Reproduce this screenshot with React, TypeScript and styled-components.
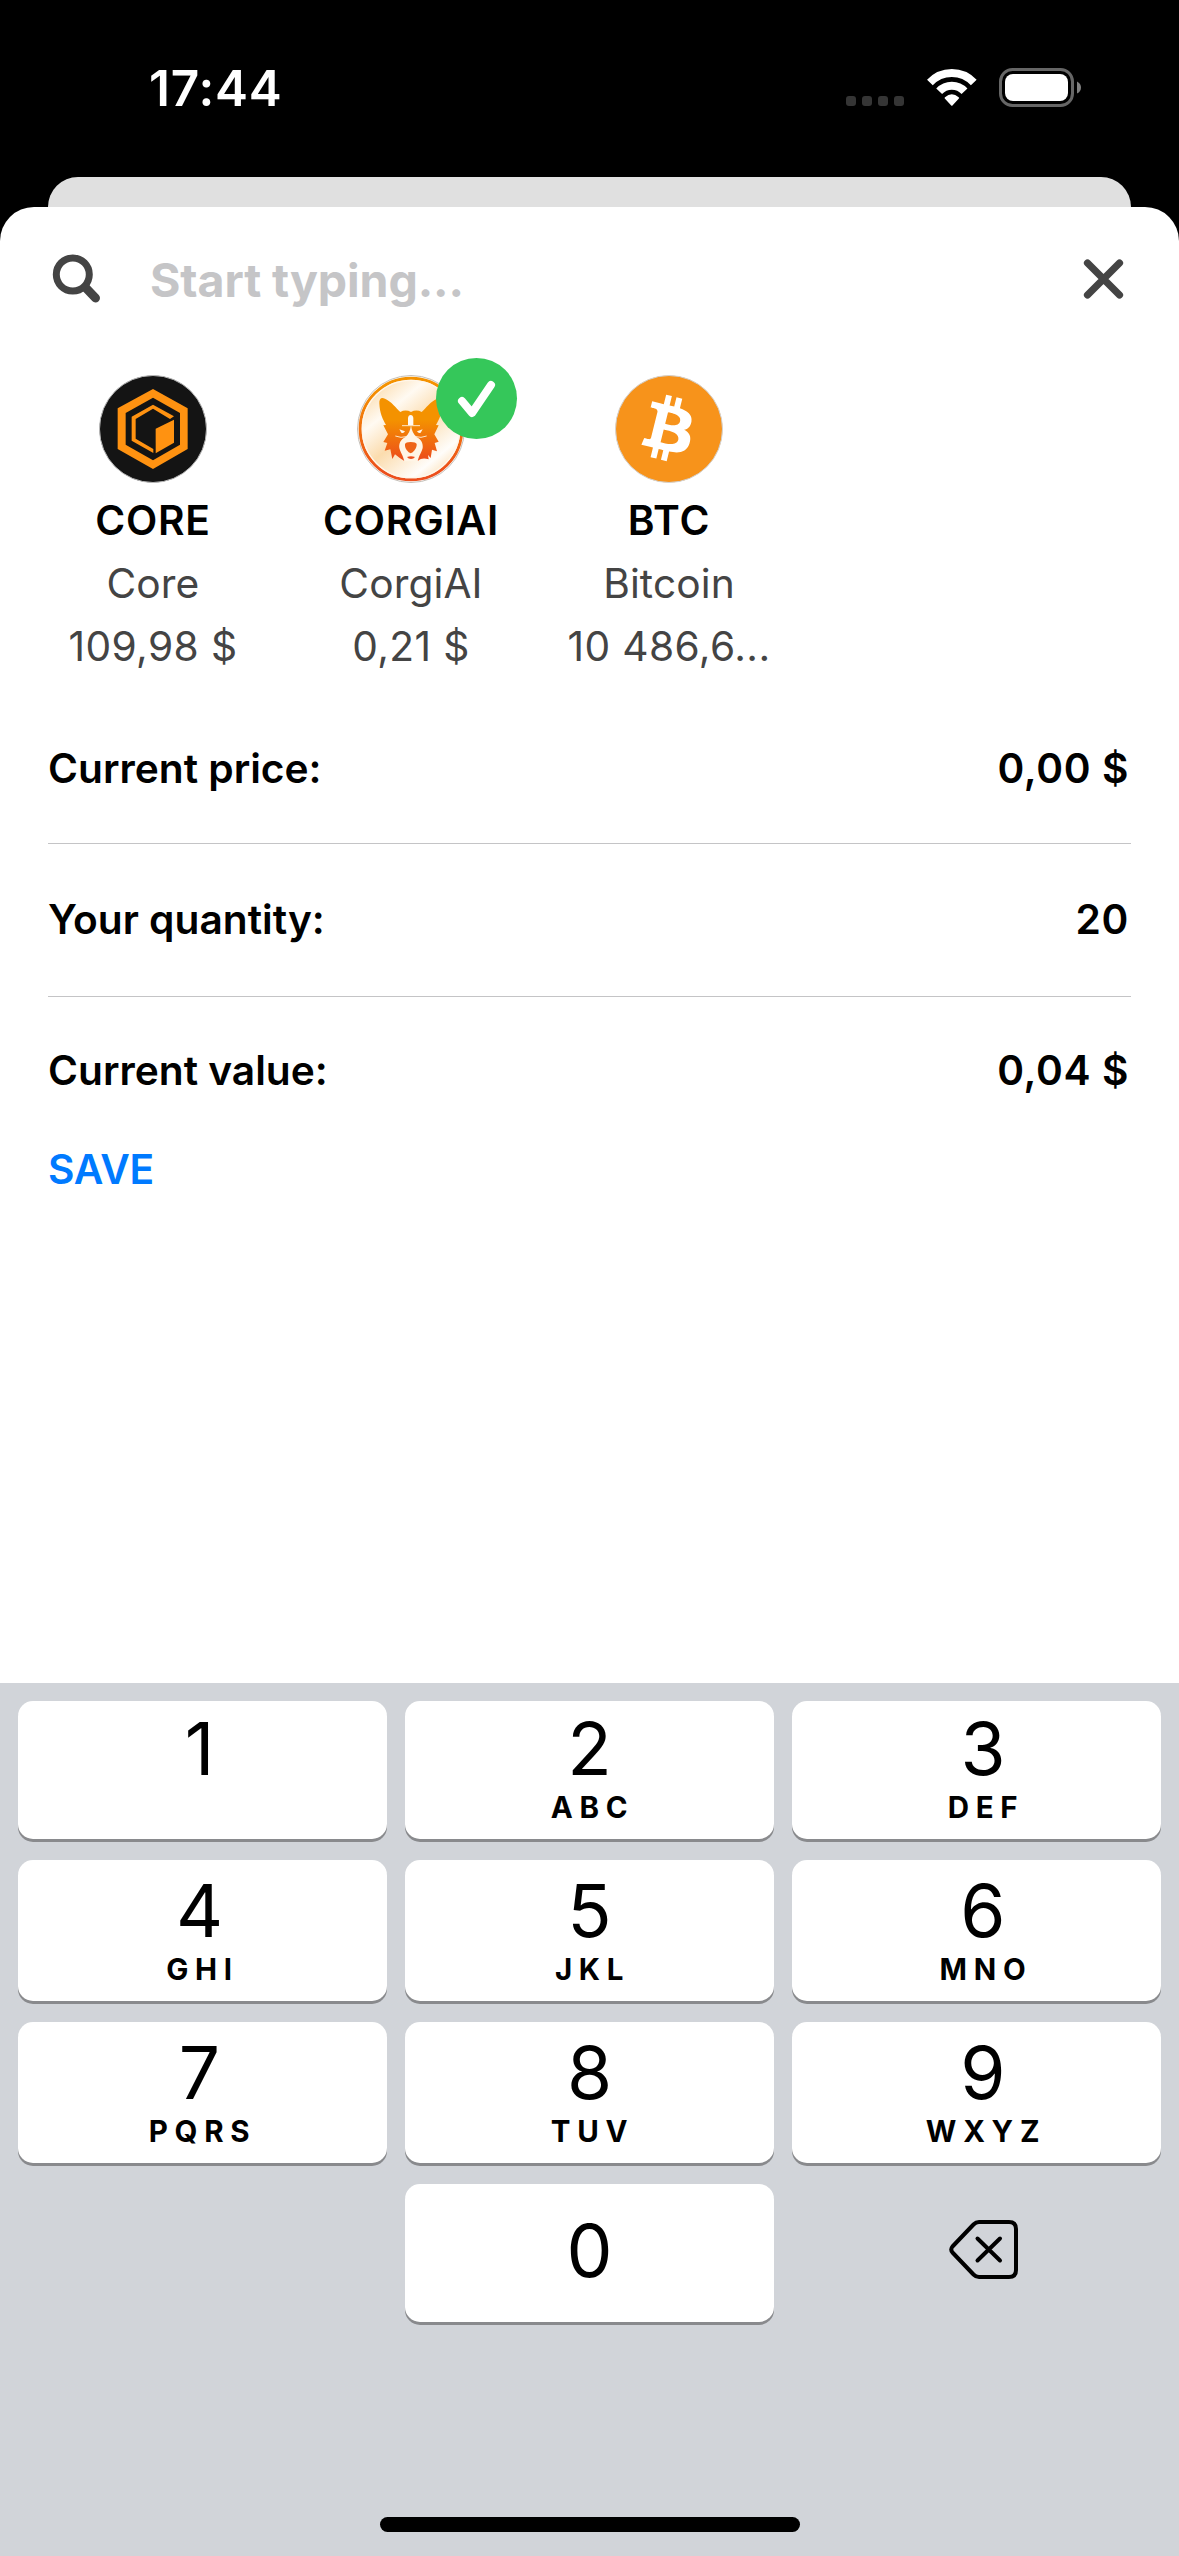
import React from "react";
import styled, { createGlobalStyle } from "styled-components";

const GlobalStyle = createGlobalStyle`
  *, *::before, *::after { box-sizing: border-box; }
  body { margin: 0; background: #000; }
  button, input { font: inherit; border: 0; padding: 0; background: none; }
`;

const Screen = styled.div`
  width: 1179px;
  height: 2556px;
  display: flex;
  flex-direction: column;
  overflow: hidden;
  background: #000;
  color: #000;
  font-family: Inter, "Liberation Sans", sans-serif;
`;

const StatusBar = styled.header`
  height: 177px;
  flex: none;
  display: flex;
  justify-content: space-between;
  align-items: flex-start;
  padding: 58px 98px 0 149px;
`;

const Time = styled.span`
  color: #fff;
  font-size: 49.5px;
  line-height: 60px;
  font-weight: 600;
  letter-spacing: 0.8px;
`;

const StatusIcons = styled.div`
  display: flex;
  padding-top: 10px;
`;

const SignalDots = styled.div`
  display: flex;
  gap: 6px;
  padding-top: 28px;
  margin-right: 23px;
`;

const SignalDot = styled.span`
  width: 10px;
  height: 10px;
  border-radius: 3px;
  background: #353535;
`;

const WifiSvg = styled.svg`
  display: block;
  width: 50px;
  height: 39px;
  margin-right: 22px;
`;

const BatterySvg = styled.svg`
  display: block;
  width: 82px;
  height: 39px;
`;

const BackSheet = styled.div`
  flex: none;
  height: 30px;
  margin: 0 48px;
  background: #e0e0e0;
  border-radius: 30px 30px 0 0;
`;

const Sheet = styled.main`
  flex: 1;
  display: flex;
  flex-direction: column;
  background: #fff;
  border-radius: 34px 34px 0 0;
`;

const SearchBar = styled.div`
  display: flex;
  align-items: center;
  height: 144px;
  padding: 0 54px 0 51px;
`;

const SearchSvg = styled.svg`
  flex: none;
  width: 52px;
  height: 52px;
`;

const SearchInput = styled.input`
  flex: 1;
  min-width: 0;
  height: 66px;
  margin-left: 47px;
  padding-top: 2px;
  font-size: 46.5px;
  font-weight: 700;
  letter-spacing: -0.1px;
  outline: none;
  &::placeholder {
    color: #c5c5c7;
    opacity: 1;
  }
`;

const CloseButton = styled.button`
  width: 43px;
  height: 43px;
  svg {
    display: block;
  }
`;

const CoinList = styled.div`
  display: flex;
  padding: 24px 24px 13px;
`;

const CoinTile = styled.div`
  width: 258px;
  padding: 0 20px;
  display: flex;
  flex-direction: column;
  align-items: center;
`;

const CoinIcon = styled.div`
  position: relative;
  width: 108px;
  height: 108px;
  margin-bottom: 6px;
  > svg {
    display: block;
    width: 108px;
    height: 108px;
  }
`;

const SelectedBadge = styled.span`
  position: absolute;
  top: -17px;
  left: 79px;
  width: 81px;
  height: 81px;
  border-radius: 50%;
  background: #35c75a;
  svg {
    display: block;
  }
`;

const CoinText = styled.span<{ $strong?: boolean; $spacing?: number }>`
  font-size: 40.7px;
  line-height: 63px;
  white-space: pre;
  letter-spacing: ${(p) => p.$spacing ?? 0}px;
  font-weight: ${(p) => (p.$strong ? 600 : 400)};
  color: ${(p) => (p.$strong ? "#000" : "#444")};
`;

const Row = styled.div<{ $first?: boolean; $last?: boolean }>`
  display: flex;
  justify-content: space-between;
  align-items: center;
  height: ${(p) => (p.$last ? 147 : 153)}px;
  margin: 0 48px;
  padding-top: ${(p) => (p.$first ? 4 : 0)}px;
  padding-right: 2px;
  border-bottom: ${(p) => (p.$last ? "0" : "1px solid #c4c4c6")};
  font-size: 40.7px;
  line-height: 60px;
  font-weight: 600;
  white-space: pre;
`;

const RowValue = styled.span`
  letter-spacing: 0.6px;
`;

const SaveButton = styled.button`
  align-self: flex-start;
  margin: -4px 0 0 48px;
  height: 60px;
  color: #007aff;
  font-size: 40.7px;
  line-height: 60px;
  font-weight: 600;
  letter-spacing: -0.2px;
`;

const Keyboard = styled.section`
  flex: none;
  height: 873px;
  display: flex;
  flex-direction: column;
  align-items: center;
  padding: 18px 18px 24px;
  background: #d1d4d9;
`;

const Keys = styled.div`
  width: 100%;
  display: grid;
  grid-template-columns: repeat(3, 369px);
  grid-template-rows: 138px 141px 141px 138px;
  column-gap: 18px;
  row-gap: 21px;
`;

const Key = styled.button<{ $top: number; $shift: number }>`
  display: flex;
  flex-direction: column;
  align-items: center;
  justify-content: flex-start;
  padding-top: ${(p) => p.$top}px;
  padding-left: ${(p) => Math.max(0, p.$shift * 2)}px;
  padding-right: ${(p) => Math.max(0, p.$shift * -2)}px;
  color: #000;
  background: #fff;
  border-radius: 15px;
  box-shadow: 0 3px 0 #898a8d;
`;

const Digit = styled.span`
  font-size: 73px;
  line-height: 53px;
  font-weight: 400;
`;

const Letters = styled.span`
  margin-top: 22px;
  padding-left: 6px;
  font-size: 29.5px;
  line-height: 21px;
  font-weight: 700;
  letter-spacing: 6.7px;
`;

const EmptyCell = styled.span``;

const DeleteKey = styled.button`
  display: flex;
  justify-content: center;
  align-items: flex-start;
  padding: 34px 0 0 15px;
`;

const HomeIndicator = styled.div`
  width: 420px;
  height: 15px;
  margin-top: auto;
  border-radius: 8px;
  background: #000;
`;

const WifiIcon = () => (
  <WifiSvg viewBox="440 204 150 117" fill="none">
    <path d="M448.7 247.6A90 90 0 0 1 580.3 247.6" stroke="#fff" strokeWidth="23.5" />
    <path d="M476.5 273.5A52 52 0 0 1 552.5 273.5" stroke="#fff" strokeWidth="24" />
    <path d="M494 296Q491 293 494 291.500Q514.500 274 535 291.500Q538 293 535 296L517 316Q514.500 319 512 316Z" fill="#fff" />
  </WifiSvg>
);

const BatteryIcon = () => (
  <BatterySvg viewBox="0 0 82 39">
    <rect x="1.500" y="1.500" width="72" height="36" rx="12" fill="none" stroke="#666" strokeWidth="3" />
    <rect x="6" y="6" width="63" height="27" rx="8" fill="#fff" />
    <path d="M78 13.500Q82 15.500 82 19.500T78 25.500Z" fill="#808080" />
  </BatterySvg>
);

const SearchIcon = () => (
  <SearchSvg viewBox="0 0 52 52" fill="none" stroke="#444">
    <circle cx="21.800" cy="21.500" r="16.500" strokeWidth="7" />
    <path d="M34.500 34.500L44.500 45" strokeWidth="9" strokeLinecap="round" />
  </SearchSvg>
);

const CoreLogo = () => (
  <svg viewBox="178 105 324 324">
    <circle cx="340" cy="267" r="160.500" fill="#141414" stroke="#b9b9b9" strokeWidth="3" />
    <path
      fill="#ff9211"
      fillRule="evenodd"
      d="M340 147L444 205V327L340 387L234 327V205ZM340 173L258 219V314L340 361L421 314V219Z"
    />
    <path fill="#ff9211" d="M340 194L403 229L391 237L340 206L288 237V296L341 327V339L276 302V230Z" />
    <path fill="#ff9211" d="M348 266L403 239V308L348 340Z" />
  </svg>
);

const CorgiLogo = () => (
  <svg viewBox="171 105 324 324">
    <defs>
      <linearGradient id="corgiFur" x1="0" y1="174" x2="0" y2="362" gradientUnits="userSpaceOnUse">
        <stop offset="0.350" stopColor="#f49200" />
        <stop offset="1" stopColor="#ec4b1c" />
      </linearGradient>
      <linearGradient id="corgiRing" x1="0" y1="105" x2="0" y2="429" gradientUnits="userSpaceOnUse">
        <stop offset="0.100" stopColor="#f49200" />
        <stop offset="0.900" stopColor="#ec4f1c" />
      </linearGradient>
      <linearGradient id="corgiFace" x1="230" y1="130" x2="450" y2="400" gradientUnits="userSpaceOnUse">
        <stop offset="0" stopColor="#fbdcae" />
        <stop offset="0.250" stopColor="#fffaf2" />
        <stop offset="0.500" stopColor="#fbdcae" />
        <stop offset="0.820" stopColor="#fffdfa" />
        <stop offset="1" stopColor="#fbdcae" />
      </linearGradient>
    </defs>
    <circle cx="333" cy="267" r="160.500" fill="#fff" stroke="#c4bfb8" strokeWidth="3" />
    <circle cx="333" cy="267" r="152.500" fill="url(#corgiFace)" stroke="url(#corgiRing)" strokeWidth="9" />
    <circle cx="333" cy="267" r="146" fill="none" stroke="#fff6ea" strokeWidth="4" />
    <path
      fill="url(#corgiFur)"
      d="M238 190C237 176 244 170 255 176C274 184 288 204 301 216C312 210 323 211 333 216C343 211 354 210 365 216C378 204 392 184 411 176C422 170 429 176 428 190C427 220 417 240 408 255L416 256L403 283L416 305L404 309L411 334L396 329L392 354L384 345L386 358Q366 352 354 362L333 358L312 362Q300 356 285 343L277 357L271 328L254 332L262 309L250 306L264 283L250 256L258 255C249 240 239 220 238 190Z"
    />
    <path
      fill="#fff5e6"
      d="M333 256C331 272 326 283 316 291C303 298 296 310 298 324C301 337 309 346 313 364H353C357 346 365 337 368 324C370 310 363 298 350 291C340 283 335 272 333 256Z"
    />
    <path fill="#fffaf2" d="M324 256V234Q325 225 332 225Q339 225 340 234V256Z" />
    <path d="M306 257H360M286 288Q304 295 318 290M380 288Q362 295 348 290" stroke="#fde8c8" strokeWidth="3" fill="none" />
    <path fill="#fff5e6" d="M298 268L315 274Q311 281 304 278ZM368 268L351 274Q355 281 362 278Z" />
    <path fill="#ee6418" d="M315 312Q317 306 332 306Q348 306 350 312Q351 325 338 337Q332 342 326 337Q313 325 315 312Z" />
    <path fill="#ed4d1b" d="M321 351Q333 346 345 351Q341 357 333 357Q325 357 321 351Z" />
  </svg>
);

const BitcoinLogo = () => (
  <svg viewBox="226 105 324 324">
    <circle cx="388" cy="267" r="160.500" fill="#f7931b" stroke="#d2d2d2" strokeWidth="3" />
    <path
      transform="translate(223.500 104) scale(10)"
      fill="#fff"
      d="M23.189 14.020c.314-2.096-1.283-3.223-3.465-3.975l.708-2.840-1.728-.430-.690 2.765c-.454-.114-.920-.220-1.385-.326l.695-2.783L15.596 6l-.708 2.839c-.376-.086-.746-.170-1.104-.260l.002-.009-2.384-.595-.460 1.846s1.283.294 1.256.312c.700.175.826.638.805 1.006l-.806 3.235c.048.012.110.030.180.057l-.183-.045-1.130 4.532c-.086.212-.303.531-.793.410.018.025-1.256-.313-1.256-.313l-.858 1.978 2.250.561c.418.105.828.215 1.231.318l-.715 2.872 1.727.430.708-2.840c.472.127.930.245 1.378.357l-.706 2.828 1.728.430.715-2.866c2.948.558 5.164.333 6.097-2.333.752-2.146-.037-3.385-1.588-4.192 1.130-.260 1.980-1.003 2.207-2.538zm-3.950 5.538c-.533 2.147-4.148.986-5.320.695l.950-3.805c1.172.293 4.929.872 4.370 3.110zm.535-5.569c-.487 1.953-3.495.960-4.470.717l.860-3.450c.975.243 4.118.696 3.610 2.733z"
    />
  </svg>
);

const CheckIcon = () => (
  <svg width="81" height="81" viewBox="0 0 81 81" fill="none">
    <path
      d="M26 43L36 55L55 27"
      stroke="#fff"
      strokeWidth="8"
      strokeLinecap="round"
      strokeLinejoin="round"
    />
  </svg>
);

const coins = [
  { symbol: "CORE", name: "Core", value: "109,98 $", logo: <CoreLogo />, selected: false },
  { symbol: "CORGIAI", name: "CorgiAI", value: "0,21 $", logo: <CorgiLogo />, selected: true },
  { symbol: "BTC", name: "Bitcoin", value: "10 486,6...", logo: <BitcoinLogo />, selected: false },
];

const rows = [
  { label: "Current price:", value: "0,00 $" },
  { label: "Your quantity:", value: "20" },
  { label: "Current value:", value: "0,04 $" },
];

const digitKeys = [
  ["1", ""],
  ["2", "ABC"],
  ["3", "DEF"],
  ["4", "GHI"],
  ["5", "JKL"],
  ["6", "MNO"],
  ["7", "PQRS"],
  ["8", "TUV"],
  ["9", "WXYZ"],
];

const columnShift = [-3, 0, 6.5];

export default function App() {
  return (
    <>
      <GlobalStyle />
      <Screen>
        <StatusBar>
          <Time>17:44</Time>
          <StatusIcons>
            <SignalDots>
              <SignalDot />
              <SignalDot />
              <SignalDot />
              <SignalDot />
            </SignalDots>
            <WifiIcon />
            <BatteryIcon />
          </StatusIcons>
        </StatusBar>
        <BackSheet />
        <Sheet>
          <SearchBar>
            <SearchIcon />
            <SearchInput placeholder="Start typing..." />
            <CloseButton aria-label="Close">
              <svg width="43" height="43" viewBox="0 0 43 43" fill="none">
                <path
                  d="M5.500 5L37.500 37M37.500 5L5.500 37"
                  stroke="#444"
                  strokeWidth="7.200"
                  strokeLinecap="round"
                />
              </svg>
            </CloseButton>
          </SearchBar>
          <CoinList>
            {coins.map((coin) => (
              <CoinTile key={coin.symbol}>
                <CoinIcon>
                  {coin.logo}
                  {coin.selected && (
                    <SelectedBadge>
                      <CheckIcon />
                    </SelectedBadge>
                  )}
                </CoinIcon>
                <CoinText $strong $spacing={0.8}>{coin.symbol}</CoinText>
                <CoinText $spacing={0.1}>{coin.name}</CoinText>
                <CoinText $spacing={0.4}>{coin.value}</CoinText>
              </CoinTile>
            ))}
          </CoinList>
          {rows.map((row, i) => (
            <Row key={row.label} $first={i === 0} $last={i === rows.length - 1}>
              <span>{row.label}</span>
              <RowValue>{row.value}</RowValue>
            </Row>
          ))}
          <SaveButton>SAVE</SaveButton>
        </Sheet>
        <Keyboard>
          <Keys>
            {digitKeys.map(([digit, letters], i) => (
              <Key key={digit} $top={i < 3 ? 21 : 24} $shift={columnShift[i % 3]}>
                <Digit>{digit}</Digit>
                {letters && <Letters>{letters}</Letters>}
              </Key>
            ))}
            <EmptyCell />
            <Key $top={40} $shift={0}>
              <Digit>0</Digit>
            </Key>
            <DeleteKey aria-label="Delete">
              <svg width="72" height="63" viewBox="0 0 72 63" fill="none" stroke="#000" strokeLinecap="round" strokeLinejoin="round">
                <path
                  d="M31 4H61Q68 4 68 11V52Q68 59 61 59H31Q28 59 25.500 56.500L4.500 34.500Q2 31.500 4.500 28.500L25.500 6.500Q28 4 31 4Z"
                  strokeWidth="4"
                />
                <path d="M29.500 20.500L52 42.500M52 20.500L29.500 42.500" strokeWidth="4" />
              </svg>
            </DeleteKey>
          </Keys>
          <HomeIndicator />
        </Keyboard>
      </Screen>
    </>
  );
}
